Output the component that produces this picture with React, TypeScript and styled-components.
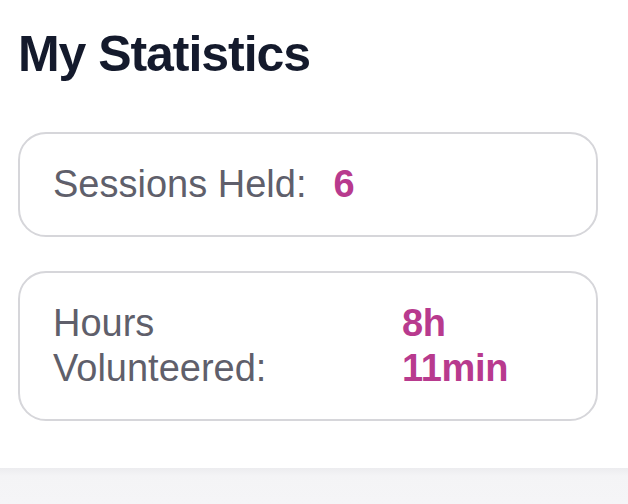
import * as React from 'react';
import styled, { createGlobalStyle } from 'styled-components';

const GlobalStyle = createGlobalStyle`
    html, body {
        margin: 0;
        padding: 0;
        background: #ffffff;
        overflow: hidden;
    }
    body {
        font-family: "Liberation Sans", Arial, Helvetica, sans-serif;
        -webkit-font-smoothing: antialiased;
    }
`;

const Page = styled.div`
    display: flex;
    flex-direction: column;
    width: 628px;
    height: 504px;
`;

const Section = styled.section`
    display: flex;
    flex-direction: column;
    gap: 34px;
    padding: 26px 30px 47px 18px;
`;

const Title = styled.h1`
    margin: 0 0 16px;
    font-size: 50px;
    line-height: 56px;
    font-weight: 700;
    letter-spacing: -1.05px;
    color: #141a2c;
`;

const Card = styled.div`
    display: flex;
    align-items: center;
    padding: 28px 33px;
    border: 2px solid #d6d6da;
    border-radius: 28px;
    background: #ffffff;
`;

const Row = styled.div<{ split?: boolean }>`
    display: grid;
    grid-template-columns: ${(props) => (props.split ? '322px 1fr' : 'auto auto')};
    justify-content: start;
    column-gap: 27px;
    width: 100%;
    font-size: 38px;
    line-height: 45px;
`;

const Label = styled.span`
    color: #5f5f6b;
    font-weight: 400;
`;

const Value = styled.span`
    color: #b83a8e;
    font-weight: 700;
    letter-spacing: -0.3px;
`;

const Footer = styled.div`
    flex: 1;
    min-height: 36px;
    background: linear-gradient(#ececef 0, #f4f4f6 8px, #f5f5f7 100%);
`;

interface StatProps {
    label: React.ReactNode;
    value: React.ReactNode;
    split?: boolean;
}

const Stat = ({ label, value, split }: StatProps) => (
    <Card>
        <Row split={split}>
            <Label>{label}</Label>
            <Value>{value}</Value>
        </Row>
    </Card>
);

export default function App() {
    return (
        <Page>
            <GlobalStyle />
            <Section>
                <Title>My Statistics</Title>
                <Stat label="Sessions Held:" value="6" />
                <Stat
                    split
                    label={
                        <>
                            Hours
                            <br />
                            Volunteered:
                        </>
                    }
                    value={
                        <>
                            8h
                            <br />
                            11min
                        </>
                    }
                />
            </Section>
            <Footer />
        </Page>
    );
}
